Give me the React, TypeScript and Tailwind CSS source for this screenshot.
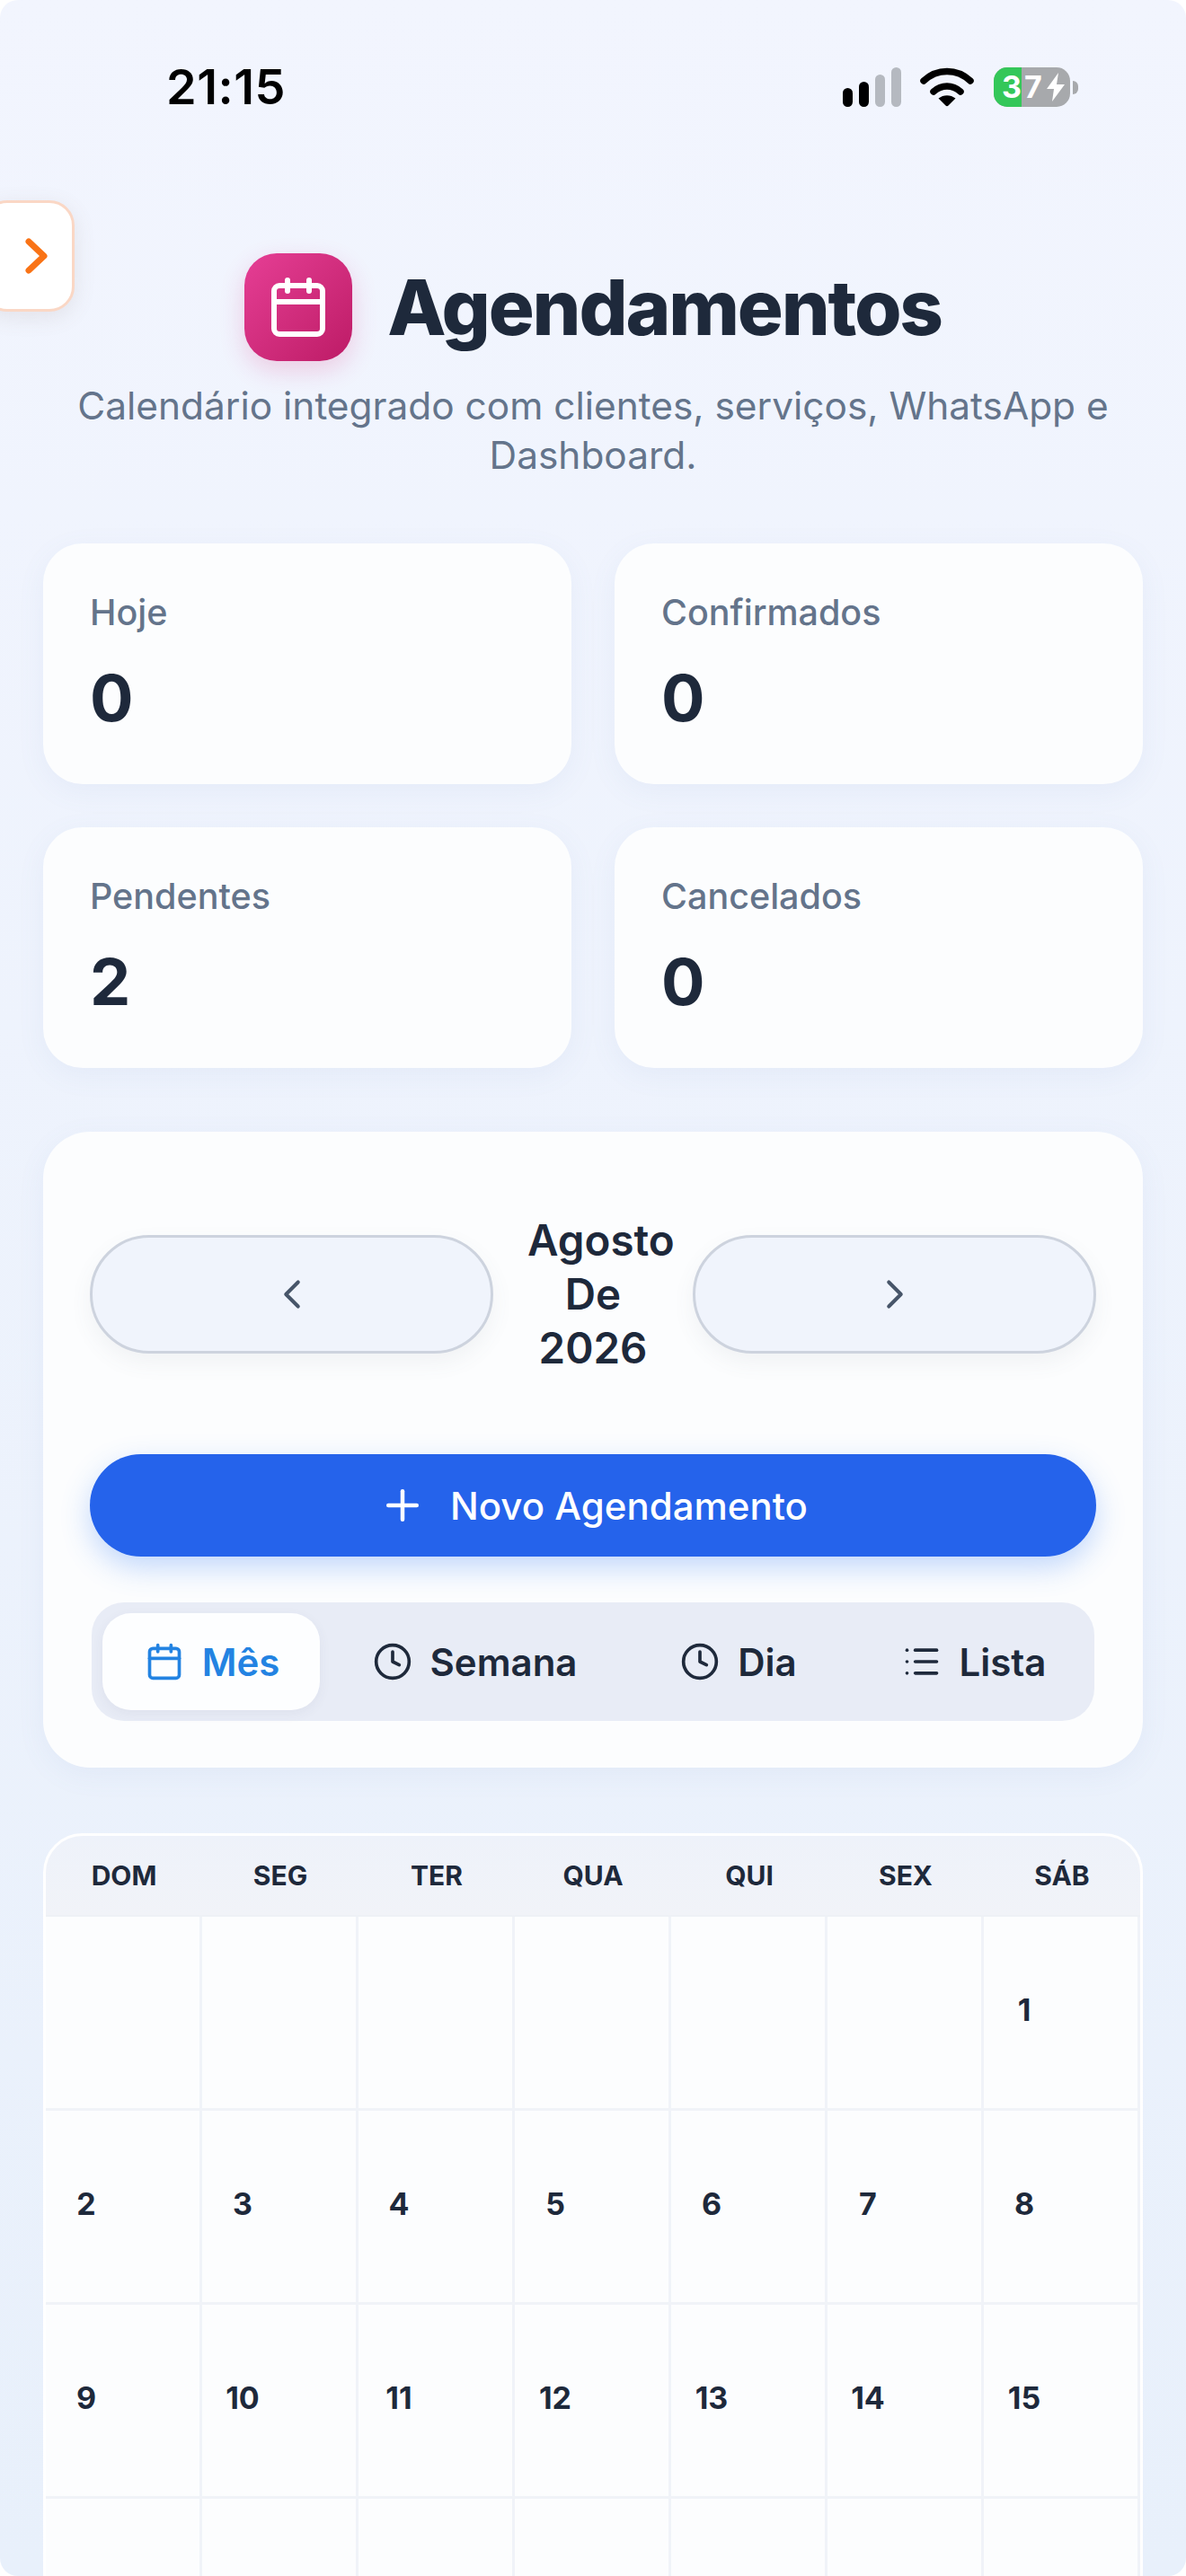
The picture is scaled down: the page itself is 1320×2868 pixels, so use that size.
import { Calendar, ChevronLeft, ChevronRight, Clock, List, Plus } from "lucide-react";

const stats = [
  { label: "Hoje", value: 0 },
  { label: "Confirmados", value: 0 },
  { label: "Pendentes", value: 2 },
  { label: "Cancelados", value: 0 },
];

const weekDays = ["DOM", "SEG", "TER", "QUA", "QUI", "SEX", "SÁB"];

// agosto 2026 começa no sábado; a quarta semana fica sem número visível
const days: (number | null)[] = [
  null, null, null, null, null, null,
  ...Array.from({ length: 15 }, (_, i) => i + 1),
  null, null, null, null, null, null, null,
];

function StatusBar() {
  return (
    <div className="flex items-center justify-between pl-[185px] pr-[120px] pt-[72px] h-[122px]">
      <span className="text-[54px] leading-[50px] font-semibold tracking-[0.5px] text-black">21:15</span>
      <div className="flex items-center">
        {/* sinal */}
        <svg width="65" height="44" viewBox="0 0 65 44">
          <rect x="0" y="23" width="11" height="21" rx="5.5" fill="#000" />
          <rect x="18" y="16" width="11" height="28" rx="5.5" fill="#000" />
          <rect x="36" y="8" width="11" height="36" rx="5.5" fill="#b5b9c0" />
          <rect x="54" y="0" width="11" height="44" rx="5.5" fill="#b5b9c0" />
        </svg>
        {/* wifi */}
        <svg className="ml-[21px]" width="60" height="44" viewBox="0 0 60 44">
          <path d="M4 15C19 1 41 1 56 15" fill="none" stroke="#000" strokeWidth="7.5" strokeLinecap="round" />
          <path d="M15 27C24 19 36 19 45 27" fill="none" stroke="#000" strokeWidth="7.5" strokeLinecap="round" />
          <path d="M20.5 34.5C26 30 34 30 39.5 34.5L31.5 42.5C30.6 43.4 29.4 43.4 28.5 42.5Z" fill="#000" />
        </svg>
        {/* bateria */}
        <div className="ml-[22px] relative w-[85px] h-[44px] rounded-[15px] bg-[#a7a9ac] flex items-center text-white">
          <div className="absolute left-0 top-0 bottom-0 w-[31px] rounded-l-[15px] bg-[#34c759]" />
          <span className="relative pl-[9px] text-[34px] leading-[44px] font-bold tracking-[3px]">37</span>
          <svg className="absolute left-[58px] top-[6px]" width="22" height="32" viewBox="0 0 22 32">
            <path d="M14 0L1 18H9L7 32L21 13H12Z" fill="#fff" />
          </svg>
        </div>
        <div className="ml-[3px] w-[6px] h-[15px] rounded-r-full bg-[#a7a9ac]" />
      </div>
    </div>
  );
}

function StatCard({ label, value }: { label: string; value: number }) {
  return (
    <div className="h-[268px] rounded-[44px] bg-[#fcfdfe] pl-[52px] pt-[54px] shadow-[0_8px_32px_rgba(100,130,190,0.07)]">
      <p className="text-[39.5px] leading-[46px] font-medium text-[#64748b]">{label}</p>
      <p className="mt-[28px] text-[72px] leading-[88px] font-bold text-[#1e293b]">{value}</p>
    </div>
  );
}

function MonthButton({ children }: { children: React.ReactNode }) {
  return (
    <button className="flex-1 h-[132px] rounded-full border-[3px] border-[#cdd3de] bg-[#f0f4fc] text-[#475569] flex items-center justify-center shadow-[0_10px_24px_rgba(90,100,120,0.07)]">
      {children}
    </button>
  );
}

export default function App() {
  return (
    <div className="relative w-[1320px] h-[2868px] overflow-hidden rounded-[20px] bg-gradient-to-b from-[#f2f5fe] to-[#e8f0fb] [font-family:Inter,sans-serif]">
      <StatusBar />

      {/* botão lateral */}
      <button className="absolute left-[-20px] top-[223px] w-[103px] h-[124px] rounded-[28px] border-[3px] border-[#fad7c5] bg-white flex items-center pl-[43px] shadow-[0_6px_24px_rgba(120,100,80,0.12)]">
        <svg width="30" height="44" viewBox="0 0 30 44">
          <path d="M6 6L23 22L6 38" fill="none" stroke="#f97316" strokeWidth="7" strokeLinecap="round" strokeLinejoin="round" />
        </svg>
      </button>

      {/* cabeçalho */}
      <header className="mt-[160px] flex flex-col items-center">
        <div className="flex items-center gap-[39px] h-[120px]">
          <div className="w-[120px] h-[120px] rounded-[36px] bg-gradient-to-br from-[#e63e95] to-[#bd1a66] flex items-center justify-center shadow-[0_10px_28px_rgba(219,39,119,0.2)]">
            <Calendar size={72} color="#fff" strokeWidth={2} />
          </div>
          <h1 className="pt-[2px] text-[85px] leading-[120px] font-extrabold tracking-[-2.2px] text-[#1e293b]">Agendamentos</h1>
        </div>
        <p className="mt-[22px] w-[1200px] text-center text-[42.4px] leading-[55px] text-[#64748b]">
          Calendário integrado com clientes, serviços, WhatsApp e Dashboard.
        </p>
      </header>

      <main className="mt-[71px] px-[48px]">
        <section className="grid grid-cols-2 gap-x-[48px] gap-y-[48px]">
          {stats.map((s) => (
            <StatCard key={s.label} label={s.label} value={s.value} />
          ))}
        </section>

        {/* navegação do mês */}
        <section className="mt-[71px] h-[708px] rounded-[52px] bg-[#fcfdfe] px-[52px] pt-[91px] shadow-[0_8px_32px_rgba(100,130,190,0.07)]">
          <div className="flex items-center gap-[38px] h-[180px]">
            <MonthButton>
              <ChevronLeft size={54} strokeWidth={1.8} />
            </MonthButton>
            <h2 className="w-[146px] shrink-0 text-center text-[47.5px] leading-[60px] font-semibold text-[#1e293b]">
              Agosto De 2026
            </h2>
            <MonthButton>
              <ChevronRight size={54} strokeWidth={1.8} />
            </MonthButton>
          </div>
          <button className="mt-[88px] w-full h-[114px] rounded-full bg-[#2563eb] text-white text-[42px] font-medium flex items-center justify-center gap-[26px] shadow-[0_12px_32px_rgba(59,130,246,0.3)]">
            <Plus size={54} strokeWidth={2} />
            Novo Agendamento
          </button>
          <div className="mt-[51px] mx-[2px] h-[132px] rounded-[36px] bg-[#e8ecf6] p-[12px] flex text-[42px] font-semibold text-[#1e293b]">
            <div className="w-[242px] pl-[2px] rounded-[32px] bg-[#fdfeff] text-[#2383e2] flex items-center justify-center gap-[20px] shadow-[0_4px_14px_rgba(60,70,100,0.06)]">
              <Calendar size={44} strokeWidth={2} />
              Mês
            </div>
            <div className="ml-[12px] w-[321px] flex items-center justify-center gap-[20px]">
              <Clock size={44} strokeWidth={2} />
              Semana
            </div>
            <div className="ml-[21px] w-[224px] flex items-center justify-center gap-[20px]">
              <Clock size={44} strokeWidth={2} />
              Dia
            </div>
            <div className="ml-[28px] w-[244px] flex items-center justify-center gap-[20px]">
              <List size={44} strokeWidth={2} />
              Lista
            </div>
          </div>
        </section>

        {/* calendário */}
        <section className="mt-[73px] rounded-[44px] border-[3px] border-white overflow-hidden bg-[#fcfdfe]">
          <div className="grid grid-cols-7 h-[90px] bg-gradient-to-b from-[#eef2fa] to-[#f1f3f8] border-b-[2px] border-[#eef1f6]">
            {weekDays.map((d) => (
              <div key={d} className="flex items-center justify-center text-[30px] font-bold text-[#1e293b]">
                {d}
              </div>
            ))}
          </div>
          <div className="grid grid-cols-7">
            {days.map((d, i) => (
              <div key={i} className="h-[216px] border-r-[3px] border-b-[3px] border-[#f0f3f8] flex items-center pl-[18px]">
                {d !== null && (
                  <span className="w-[54px] text-center text-[34px] font-bold text-[#1e293b] mb-[6px]">{d}</span>
                )}
              </div>
            ))}
          </div>
        </section>
      </main>
    </div>
  );
}
